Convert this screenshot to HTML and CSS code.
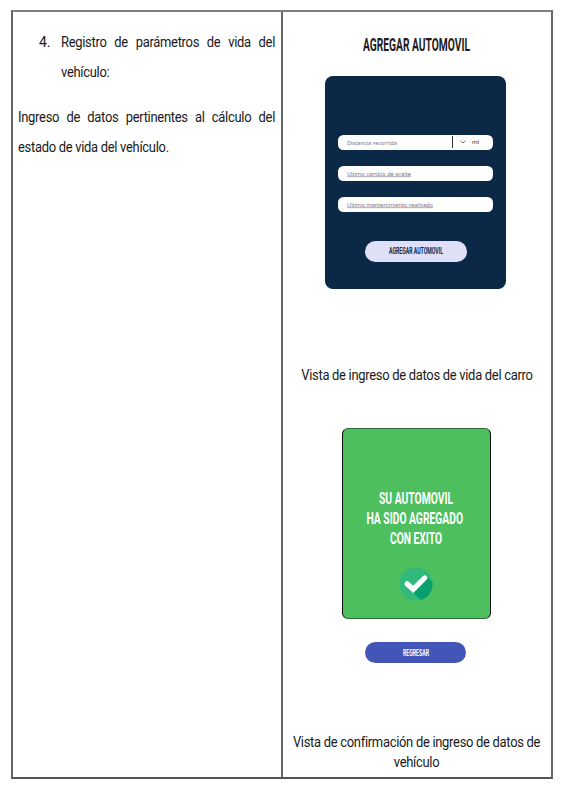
FILE: index.html
```html
<!DOCTYPE html>
<html lang="es">
<head>
<meta charset="utf-8">
<title>Registro de parámetros</title>
<link rel="stylesheet" href="styles.css">
</head>
<body>
<main class="sheet">
  <section class="cell notes">
    <div class="item">
      <span class="num">4.</span>
      <p><span class="line full">Registro de parámetros de vida del</span><span class="line">vehículo:</span></p>
    </div>
    <p class="detail"><span class="line full">Ingreso de datos pertinentes al cálculo del</span><span class="line">estado de vida del vehículo.</span></p>
  </section>
  <section class="cell views">
    <svg class="title" width="121" height="22"><text x="7" y="17" textLength="107" lengthAdjust="spacingAndGlyphs">AGREGAR AUTOMOVIL</text></svg>
    <div class="form">
      <div class="field">
        <svg width="60" height="11"><text x="0" y="7.5" textLength="50" lengthAdjust="spacingAndGlyphs">Distancia recorrida</text></svg>
        <div class="unit">
          <svg class="chevron" width="6" height="4" viewBox="0 0 6 4"><path d="M.6.8 3 3 5.4.8"/></svg>
          <span>mi</span>
        </div>
      </div>
      <div class="field"><svg width="70" height="11"><text class="u" x="0" y="7.5" textLength="64" lengthAdjust="spacingAndGlyphs">Ultimo cambio de aceite</text></svg></div>
      <div class="field"><svg width="90" height="11"><text class="u" x="0" y="7.5" textLength="86" lengthAdjust="spacingAndGlyphs">Ultimo mantenimiento realizado</text></svg></div>
      <div class="pill add"><svg width="64" height="14"><text x="5" y="10" textLength="54" lengthAdjust="spacingAndGlyphs">AGREGAR AUTOMOVIL</text></svg></div>
    </div>
    <p class="caption first">Vista de ingreso de datos de vida del carro</p>
    <div class="success">
      <svg class="message" width="120" height="60">
        <text x="22" y="15.7" textLength="74" lengthAdjust="spacingAndGlyphs">SU AUTOMOVIL</text>
        <text x="9.5" y="35.7" textLength="96.5" lengthAdjust="spacingAndGlyphs">HA SIDO AGREGADO</text>
        <text x="33" y="55.7" textLength="52" lengthAdjust="spacingAndGlyphs">CON EXITO</text>
      </svg>
      <svg class="check" width="34" height="34" viewBox="0 0 34 34">
        <circle cx="17" cy="17" r="16.6" fill="#32ba7c"/>
        <path d="M14 25.5 21.8 33A16.6 16.6 0 0 0 33.5 15L27.4 9.5Z" fill="#0aa06e"/>
        <path d="M8.2 16.8 14.2 22.4 25.7 11" fill="none" stroke="#fff" stroke-width="5.2" stroke-linecap="round"/>
      </svg>
    </div>
    <div class="pill back"><svg width="36" height="14"><text x="5" y="10.2" textLength="26" lengthAdjust="spacingAndGlyphs">REGRESAR</text></svg></div>
    <p class="caption second">Vista de confirmación de ingreso de datos de<br>vehículo</p>
  </section>
</main>
</body>
</html>
```

FILE: styles.css
```css
* { box-sizing: border-box; }
body { margin: 0; background: #fff; color: #1a1a1a; font-family: Roboto, "Liberation Sans", sans-serif; }
p { margin: 0; }
svg { display: block; flex: none; }

.sheet {
  width: 542px;
  height: 769px;
  margin: 10px 0 0 11px;
  display: grid;
  grid-template-columns: 270px 1fr;
  border: 2px solid #666;
  border-top-color: #808080;
  border-bottom-color: #555;
}
.notes { border-right: 2px solid #666; padding: 15px 6px 0 5px; font-size: 14px; line-height: 30px; }
.item { display: flex; padding-left: 21px; }
.num { width: 22px; flex: none; }
.item p { flex: 1; }
.line { display: block; width: 108%; letter-spacing: -0.32px; white-space: nowrap; transform: scaleX(.926); transform-origin: left; }
.full { text-align: justify; text-align-last: justify; white-space: normal; }
.detail { margin-top: 15px; }

.views { display: flex; flex-direction: column; align-items: center; }
.title { margin: 22px 1px 0 0; font-size: 18.2px; font-weight: 700; fill: #1d1b20; }
.form {
  width: 181px;
  height: 213px;
  margin: 20px 3px 0 0;
  padding: 58.5px 13px 0;
  border-radius: 8px;
  background: #0b2846;
  display: flex;
  flex-direction: column;
  gap: 15.5px;
}
.field {
  height: 15.5px;
  flex: none;
  padding-left: 9px;
  border-radius: 5.5px;
  background: #fff;
  display: flex;
  align-items: center;
  justify-content: space-between;
  font-family: "Noto Sans", sans-serif;
  font-size: 6px;
  fill: #77748a;
}
.u { text-decoration: underline; }
.unit { width: 41px; height: 12px; border-left: 1px solid #333; display: flex; align-items: center; gap: 6px; padding-left: 7px; color: #222; }
.chevron { fill: none; stroke: #333; stroke-width: .7; }
.pill { display: flex; align-items: center; justify-content: center; border-radius: 11px; font-size: 9px; font-weight: 700; }
.add { width: 102px; height: 21.5px; flex: none; margin: 13px 0 0 27px; background: #e0dff8; fill: #0b2846; }

.caption { font-size: 14px; line-height: 20px; text-align: center; letter-spacing: -0.32px; white-space: nowrap; transform: scaleX(.926); }
.first { margin-top: 76px; }
.success {
  width: 149px;
  height: 191px;
  margin: 43px 1px 0 0;
  padding-top: 59px;
  border: 1px solid #111;
  border-top-color: #2d6b37;
  border-bottom-color: #2d6b37;
  border-radius: 6px;
  background: #4dbf5f;
  display: flex;
  flex-direction: column;
  align-items: center;
}
.message { font-size: 16.8px; font-weight: 700; fill: #fff; }
.check { margin: 19px 2px 0 0; }
.back { width: 101px; height: 21px; margin: 23px 3px 0 0; background: #4455b8; fill: #fff; }
.second { margin-top: 69px; }
```
